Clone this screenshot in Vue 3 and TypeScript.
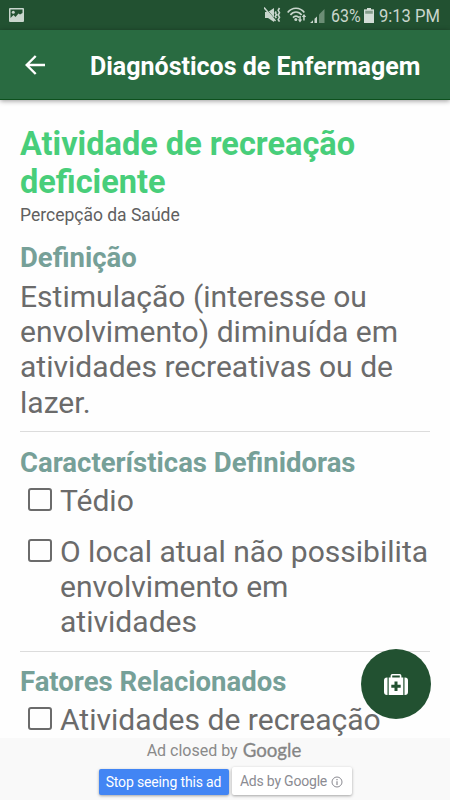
<script setup lang="ts">
interface Section {
  title: string
  items: string[]
}

const sections: Section[] = [
  {
    title: 'Características Definidoras',
    items: ['Tédio', 'O local atual não possibilita envolvimento em atividades'],
  },
  { title: 'Fatores Relacionados', items: ['Atividades de recreação'] },
]
</script>

<template>
  <div class="screen">
    <div class="status">
      <svg class="photo" viewBox="0 0 15 14">
        <path fill="#c9d6cd" fill-rule="evenodd" d="M1 0h13a1 1 0 0 1 1 1v12a1 1 0 0 1-1 1H1a1 1 0 0 1-1-1V1a1 1 0 0 1 1-1zM1.500 1.500V10l3-3 2 2 3-3.500 1.500 1 2.500-1.500V1.500z" />
        <circle cx="4.300" cy="4.300" r="1.500" fill="#c9d6cd" />
      </svg>
      <div class="indicators">
        <svg class="mute" viewBox="0 0 17 16">
          <path fill="#c9d6cd" d="M1 5h3l6-4v14l-6-4H1z" />
          <path stroke="#225131" stroke-width="1" d="M1 .5 12.500 14" />
          <path stroke="#c9d6cd" stroke-width="1.500" d="M0 .5 11.500 14" />
          <path fill="none" stroke="#c9d6cd" stroke-width="1.600" d="M12.200 4.500l-.9 1.500 1.200 1.800-1.200 1.800 1 1.500M15.500 1l-1.300 2.300 1.300 2.400L14.200 8l1.300 2.300-1.300 2.300 1.300 2" />
        </svg>
        <svg class="wifi" viewBox="0 0 20 16">
          <g fill="none" stroke="#c9d6cd" stroke-width="1.700">
            <path d="M.7 5.500C5-.2 13-.2 17.300 5.500M3.400 8C6.500 4 11.500 4 14.600 8M6 10.600c1.700-2 4.300-2 6 0" />
          </g>
          <circle cx="8.800" cy="12.500" r="1.500" fill="#c9d6cd" />
          <path fill="#c9d6cd" d="M12.300 9h1.500v3.500h1.400l-2.200 3-2.100-3h1.400zM16.200 13.500h1.500V10h1.500L17 7l-2.200 3h1.400z" />
        </svg>
        <svg class="signal" viewBox="0 0 15 14">
          <path fill="#6b8d75" d="M9 5.500 14.500 0v14H9z" />
          <path fill="#c9d6cd" d="M0 14l3-2.800V14zM4.500 9.800 7 7.400V14H4.500z" />
        </svg>
        <span class="percent">63%</span>
        <svg class="battery" viewBox="0 0 10 15">
          <path fill="#849c8a" d="M3 0h4v1.500h3V15H0V1.500h3z" />
          <path fill="#d3ddd6" d="M3 0h4v1.500h3V15H0V1.500h3zM1.200 2.700v3h7.600v-3z" fill-rule="evenodd" />
        </svg>
        <span class="clock">9:13 PM</span>
      </div>
    </div>

    <header class="appbar">
      <svg class="back" viewBox="0 0 20 20">
        <path fill="none" stroke="#fff" stroke-width="2.400" d="M20 10H1.800M10.700 1 1.700 10l9 9" />
      </svg>
      <h1>Diagnósticos de Enfermagem</h1>
    </header>

    <main class="content">
      <h2 class="title">Atividade de recreação deficiente</h2>
      <p class="subtitle">Percepção da Saúde</p>
      <h3 class="definition">Definição</h3>
      <p class="body">Estimulação (interesse ou envolvimento) diminuída em atividades recreativas ou de lazer.</p>
      <section v-for="section in sections" :key="section.title">
        <h3>{{ section.title }}</h3>
        <div class="list">
          <label v-for="item in section.items" :key="item" class="item">
            <span class="box"></span>
            <span class="text">{{ item }}</span>
          </label>
        </div>
      </section>
    </main>

    <button class="fab" aria-label="Kit">
      <svg viewBox="0 0 24 21">
        <path fill="none" stroke="#fff" stroke-width="1.600" d="M7.400 4V1.700q0-.9.900-.9h7.400q.9 0 .9.900V4" />
        <path fill="#fff" d="M3.500 3.500V21H3a3 3 0 0 1-3-3V6.500a3 3 0 0 1 3-3zM20.500 3.500V21h.5a3 3 0 0 0 3-3V6.500a3 3 0 0 0-3-3zM4.700 3.500h14.600V21H4.700z" />
        <path fill="#225131" d="M10.500 7.500h3v3.200h3.200v3h-3.200V17h-3v-3.300H7.300v-3h3.200z" />
      </svg>
    </button>

    <footer class="ad">
      <div class="closed"><span>Ad closed by</span><span class="google">Google</span></div>
      <div class="actions">
        <button class="stop">Stop seeing this ad</button>
        <button class="why">
          <span>Ads by Google</span>
          <svg viewBox="0 0 12 12">
            <circle cx="6" cy="6" r="5" fill="none" stroke="#8b8b92" />
            <path stroke="#8b8b92" stroke-width="1.200" d="M6 5.300V9M6 3v1.300" />
          </svg>
        </button>
      </div>
    </footer>
  </div>
</template>

<style>
body {
  margin: 0;
}
</style>

<style scoped>
.screen {
  position: relative;
  display: flex;
  flex-direction: column;
  width: 450px;
  height: 800px;
  overflow: hidden;
  background: #fefefe;
  font-family: Roboto, sans-serif;
  color: #6b6b6b;
}
h1, h2, h3, p {
  margin: 0;
}
svg {
  display: block;
  flex: none;
}
button {
  margin: 0;
  padding: 0;
  border: 0;
  font-family: inherit;
}
.status {
  display: flex;
  flex: none;
  align-items: center;
  justify-content: space-between;
  box-sizing: border-box;
  height: 30px;
  padding: 0 10px 0 9px;
  background: #225131;
  color: #c9d6cd;
}
.photo {
  width: 15px;
  height: 14px;
}
.indicators {
  display: flex;
  align-items: center;
  font-size: 18.5px;
  line-height: 30px;
}
.mute {
  width: 17px;
  height: 16px;
  margin-right: 6px;
}
.wifi {
  width: 20px;
  height: 16px;
  margin-right: 3px;
}
.signal {
  width: 15px;
  height: 14px;
  margin: 2px 6px 0 0;
}
.percent,
.clock {
  padding-top: 2px;
  white-space: nowrap;
  transform-origin: left center;
}
.percent {
  width: 33px;
  transform: scaleX(0.86);
}
.battery {
  width: 10px;
  height: 15px;
  margin-right: 5px;
}
.clock {
  width: 61px;
  transform: scaleX(0.895);
}
.appbar {
  z-index: 1;
  display: flex;
  flex: none;
  align-items: center;
  box-sizing: border-box;
  height: 70px;
  padding-left: 25px;
  background: #296b41;
  border-bottom: 1px solid #0d501d;
  box-shadow: 0 1px 5px rgba(0, 0, 0, 0.4);
  color: #fff;
}
.back {
  width: 20px;
  height: 20px;
}
h1 {
  margin: 4px 0 0 45px;
  font-size: 25px;
  line-height: 30px;
  font-weight: 700;
  white-space: nowrap;
}
.content {
  flex: 1;
  min-height: 0;
  overflow: hidden;
  padding: 25px 20px 0;
}
.title {
  font-size: 32.5px;
  line-height: 38px;
  color: #48ce7a;
}
.subtitle {
  margin-top: 4px;
  font-size: 17.500px;
  line-height: 21px;
  color: #606060;
}
h3 {
  font-size: 27.5px;
  line-height: 32px;
  color: #76a098;
  white-space: nowrap;
}
.definition {
  margin-top: 16px;
}
.body {
  margin-top: 4.500px;
  font-size: 30.050px;
  line-height: 35.400px;
}
section {
  margin-top: 10.600px;
  border-top: 1px solid #dcdcdc;
  padding-top: 15.300px;
}
section + section {
  margin-top: 11.500px;
  padding-top: 14px;
}
.list {
  display: flex;
  flex-direction: column;
  gap: 15.300px;
  margin-top: 4px;
}
.item {
  display: flex;
  padding-left: 8px;
  font-size: 30.050px;
  line-height: 35.300px;
}
.box {
  flex: none;
  box-sizing: border-box;
  width: 24px;
  height: 23px;
  margin: 5px 8px 0 0;
  border: 2px solid #6b6b6b;
  border-radius: 3px;
}
.fab {
  position: absolute;
  left: 361px;
  top: 649px;
  z-index: 1;
  display: grid;
  place-items: center;
  width: 70px;
  height: 70px;
  border-radius: 50%;
  background: #225131;
}
.fab svg {
  width: 24px;
  height: 21px;
}
.ad {
  display: flex;
  flex: none;
  flex-direction: column;
  align-items: center;
  box-sizing: border-box;
  height: 62px;
  background: #f9f9f9;
}
.closed {
  display: flex;
  gap: 5px;
  height: 29px;
  padding-right: 2px;
  font-size: 16px;
  line-height: 25px;
  color: #8a8a8a;
}
.google {
  font-family: Lato, sans-serif;
  font-size: 18.700px;
  line-height: 24px;
  -webkit-text-stroke: 0.300px #858585;
  color: #858585;
}
.actions {
  display: flex;
  align-items: flex-end;
  gap: 3px;
}
.stop,
.why {
  border-radius: 2px;
  box-shadow: 0 1px 3px rgba(0, 0, 0, 0.35);
  white-space: nowrap;
}
.stop {
  width: 130px;
  height: 26px;
  background: #4285f4;
  font-size: 14px;
  line-height: 26px;
  letter-spacing: -0.150px;
  color: #fff;
}
.why {
  display: flex;
  align-items: center;
  justify-content: center;
  gap: 4px;
  width: 120px;
  height: 28px;
  background: #fff;
  font-size: 14px;
  line-height: 30px;
  letter-spacing: -0.200px;
  color: #8b8b92;
}
.why svg {
  width: 12px;
  height: 12px;
  margin-top: 2px;
}
</style>
